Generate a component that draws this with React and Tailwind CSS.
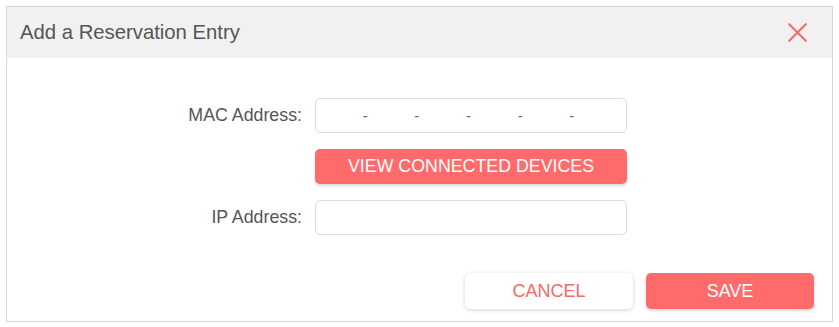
import { X } from 'lucide-react'

const MacInput = () => {
  const parts = [0, 1, 2, 3, 4, 5]
  return (
    <div className="flex items-center w-[312px] h-[35px] border border-[#dcdcdc] rounded-[5px] bg-white">
      {parts.map(i => (
        <div key={i} className="flex items-center flex-1 h-full">
          <input className="w-full h-full bg-transparent outline-none text-center" />
          {i < 5 && <span className="text-[#666] text-[15px] leading-none">-</span>}
        </div>
      ))}
    </div>
  )
}

const Row = ({ label, children }) => (
  <div className="flex items-center">
    <label className="w-[308px] pr-[13px] text-right text-[17.8px] text-[#555]">{label}</label>
    {children}
  </div>
)

export default function App() {
  return (
    <div className="p-[6px] font-['Liberation_Sans',Arial,sans-serif]">
      <div className="w-[827px] h-[316px] border border-[#d6d6d6] bg-white flex flex-col">
        <div className="h-[51px] bg-[#f1f1f1] flex items-center justify-between pl-[13px] pr-[18px]">
          <h2 className="text-[20.3px] text-[#555]">Add a Reservation Entry</h2>
          <X className="w-[33px] h-[33px] text-[#f56b6b]" strokeWidth={1.6} />
        </div>

        <div className="flex flex-col pt-[40px] gap-[16px]">
          <Row label="MAC Address:">
            <MacInput />
          </Row>
          <Row label="">
            <button className="w-[312px] h-[35px] rounded-[5px] bg-[#ff6b6b] text-white text-[17.8px] shadow-[0_2px_3px_rgba(0,0,0,0.15)]">
              VIEW CONNECTED DEVICES
            </button>
          </Row>
          <Row label="IP Address:">
            <input className="w-[312px] h-[35px] border border-[#dcdcdc] rounded-[5px] outline-none px-2" />
          </Row>
        </div>

        <div className="flex justify-end gap-[13px] pr-[18px] mt-[38px]">
          <button className="w-[168px] h-[36px] rounded-[5px] bg-white text-[#f26a6a] text-[18px] shadow-[0_1px_4px_rgba(0,0,0,0.18)]">
            CANCEL
          </button>
          <button className="w-[168px] h-[36px] rounded-[5px] bg-[#ff6b6b] text-white text-[18px] shadow-[0_2px_3px_rgba(0,0,0,0.15)]">
            SAVE
          </button>
        </div>
      </div>
    </div>
  )
}
